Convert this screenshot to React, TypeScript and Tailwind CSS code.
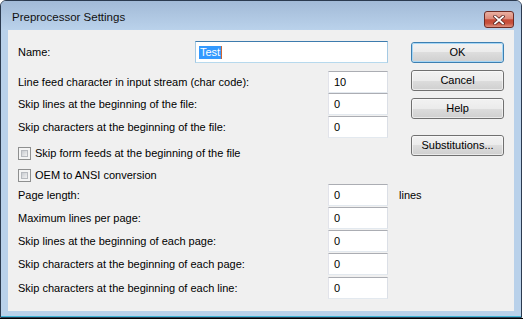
import React from 'react';

const font = { fontFamily: '"Liberation Sans", Arial, sans-serif' };

const NumField: React.FC<{ value: string }> = ({ value }) => (
  <div className="w-[60px] h-[22px] shrink-0 bg-white border border-t-[#abadb3] border-l-[#e2e3ea] border-r-[#dbdfe6] border-b-[#e3e9ef] flex items-center pl-[5px] text-[11px] text-black leading-none">
    {value}
  </div>
);

const Field: React.FC<{ label: string; value: string; className?: string; unit?: string }> = ({ label, value, className, unit }) => (
  <div className={`flex items-center h-[22px] ${className ?? ''}`}>
    <span className="flex-1 whitespace-nowrap">{label}</span>
    <NumField value={value} />
    {unit && (
      <span className="w-0 shrink-0 overflow-visible">
        <span className="block pl-[11px] whitespace-nowrap">{unit}</span>
      </span>
    )}
  </div>
);

const Check: React.FC<{ label: string; className?: string }> = ({ label, className }) => (
  <div className={`flex items-center h-[13px] ${className ?? ''}`}>
    <div className="w-[13px] h-[13px] border border-[#8e8f8f] bg-[#f4f4f4] p-[2px]">
      <div className="w-full h-full border border-[#b7babf] bg-[linear-gradient(135deg,#c9ccd1,#f1f1f1)]" />
    </div>
    <span className="ml-[4px] whitespace-nowrap">{label}</span>
  </div>
);

const Button: React.FC<{ label: string; primary?: boolean; className?: string }> = ({ label, primary, className }) => (
  <div
    className={`h-[21px] w-[93px] rounded-[3px] border ${
      primary ? 'border-[#3c7fb1]' : 'border-[#707070]'
    } bg-[linear-gradient(to_bottom,#f2f2f2_0%,#ebebeb_50%,#dddddd_50%,#cfcfcf_100%)] flex items-center justify-center text-[11px] text-black ${className ?? ''}`}
  >
    <div className={`w-full h-full rounded-[2px] border ${primary ? 'border-[#a6d6f5]' : 'border-[#fbfbfb]/60'} flex items-center justify-center`}>
      {label}
    </div>
  </div>
);

export default function App() {
  return (
    <div className="w-[523px] h-[319px] bg-white text-[11px] text-black" style={font}>
      <div className="w-[522px] h-[318px] border border-[#2b3a4f] rounded-t-[6px] bg-[#b9d1ea] flex flex-col">
        {/* Title bar */}
        <div className="h-[29px] rounded-t-[5px] bg-[linear-gradient(to_bottom,#a2bad7,#bad2eb)] flex items-end justify-between pl-[11px] pr-[7px] pb-[2px]">
          <span className="text-[11.5px] leading-none mb-[5px] text-[#111]">Preprocessor Settings</span>
          <div className="w-[30px] h-[17px] rounded-[3px] border border-[#6e2c25] bg-[linear-gradient(to_bottom,#eab0a2_0%,#dc8b7b_45%,#c54a36_52%,#c7513d_75%,#de917f_100%)] flex items-center justify-center">
            <svg width="12" height="10" viewBox="0 0 12 10">
              <path d="M2 1.5 L10 8.5 M10 1.5 L2 8.5" stroke="#5a2520" strokeWidth="3.4" strokeLinecap="square" />
              <path d="M2 1.5 L10 8.5 M10 1.5 L2 8.5" stroke="#ffffff" strokeWidth="1.8" strokeLinecap="square" />
            </svg>
          </div>
        </div>

        {/* Client area */}
        <div className="mx-[7px] h-[281px] bg-[#f0f0f0] flex pl-[10px] pt-[11px]">
          <div className="w-[370px] flex flex-col">
            <div className="flex items-center h-[22px]">
              <span className="flex-1">Name:</span>
              <div className="w-[193px] h-[22px] bg-white border border-t-[#3d7bad] border-l-[#a4c9e3] border-r-[#a4c9e3] border-b-[#b7d9ed] flex items-center pl-[3px]">
                <span className="bg-[#3399ff] text-white leading-[13px] px-px">Test</span>
                <span className="w-px h-[13px] bg-[#cc6633]" />
              </div>
            </div>
            <Field className="mt-[8px]" label="Line feed character in input stream (char code):" value="10" />
            <Field label="Skip lines at the beginning of the file:" value="0" />
            <Field className="mt-[1px]" label="Skip characters at the beginning of the file:" value="0" />
            <Check className="mt-[9px]" label="Skip form feeds at the beginning of the file" />
            <Check className="mt-[9px]" label="OEM to ANSI conversion" />
            <Field className="mt-[2px]" label="Page length:" value="0" unit="lines" />
            <Field className="mt-[1px]" label="Maximum lines per page:" value="0" />
            <Field className="mt-[1px]" label="Skip lines at the beginning of each page:" value="0" />
            <Field className="mt-[1px]" label="Skip characters at the beginning of each page:" value="0" />
            <Field className="mt-[2px]" label="Skip characters at the beginning of each line:" value="0" />
          </div>
          <div className="ml-[23px] w-[93px] flex flex-col">
            <Button className="mt-[1px]" label="OK" primary />
            <Button className="mt-[7px]" label="Cancel" />
            <Button className="mt-[7px]" label="Help" />
            <Button className="mt-[16px]" label="Substitutions..." />
          </div>
        </div>
        <div className="flex-1 border-b border-[#3fb7d8]" />
      </div>
      <div className="w-[523px] h-px bg-black" />
    </div>
  );
}
